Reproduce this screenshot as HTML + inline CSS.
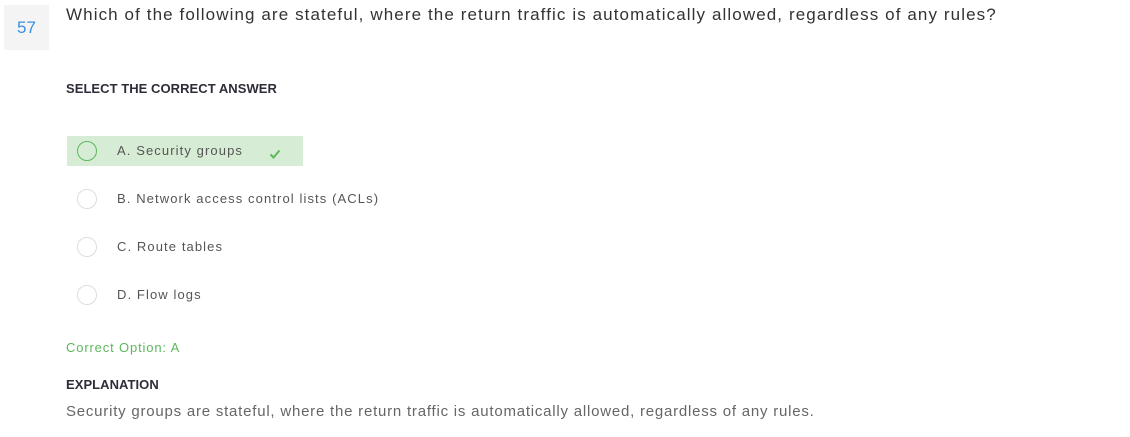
<!DOCTYPE html>
<html><head><style>
body{margin:0;width:1130px;height:437px;background:#fff;font-family:"Liberation Sans",sans-serif;position:relative;overflow:hidden}
.a{position:absolute;white-space:nowrap}
.num{left:4px;top:5px;width:45px;height:45px;background:#f4f4f4;color:#3b8fe0;font-size:17px;line-height:45px;text-align:center}
.q{left:66px;top:5px;font-size:17px;letter-spacing:1.1px;color:#333}
.h{font-weight:bold;font-size:13px;letter-spacing:0.05px;color:#2d2d3a}
.opt{font-size:13px;color:#555;letter-spacing:1.1px}
.c{width:18px;height:18px;border:1px solid #ddd;border-radius:50%;background:#fff}
</style></head><body>
<div class="a num">57</div>
<div class="a q">Which of the following are stateful, where the return traffic is automatically allowed, regardless of any rules?</div>
<div class="a h" style="left:66px;top:81px">SELECT THE CORRECT ANSWER</div>
<div class="a" style="left:67px;top:136px;width:236px;height:30px;background:#d7ecd4"></div>
<div class="a c" style="left:77px;top:141px;border-color:#5cb85c;background:transparent"></div>
<div class="a opt" style="left:117px;top:143px">A. Security groups</div>
<svg class="a" style="left:269px;top:149px" width="12" height="10" viewBox="0 0 12 10"><path d="M1.5 5.5 L4.5 8.5 L10.5 1.5" stroke="#5cb85c" stroke-width="2" fill="none"/></svg>
<div class="a c" style="left:77px;top:189px"></div>
<div class="a opt" style="left:117px;top:191px">B. Network access control lists (ACLs)</div>
<div class="a c" style="left:77px;top:237px"></div>
<div class="a opt" style="left:117px;top:239px">C. Route tables</div>
<div class="a c" style="left:77px;top:285px"></div>
<div class="a opt" style="left:117px;top:287px">D. Flow logs</div>
<div class="a" style="left:66px;top:340px;font-size:13px;color:#5cb85c;letter-spacing:0.85px">Correct Option: A</div>
<div class="a h" style="left:66px;top:377px">EXPLANATION</div>
<div class="a" style="left:66px;top:403px;font-size:15px;color:#666;letter-spacing:0.78px">Security groups are stateful, where the return traffic is automatically allowed, regardless of any rules.</div>
</body></html>
